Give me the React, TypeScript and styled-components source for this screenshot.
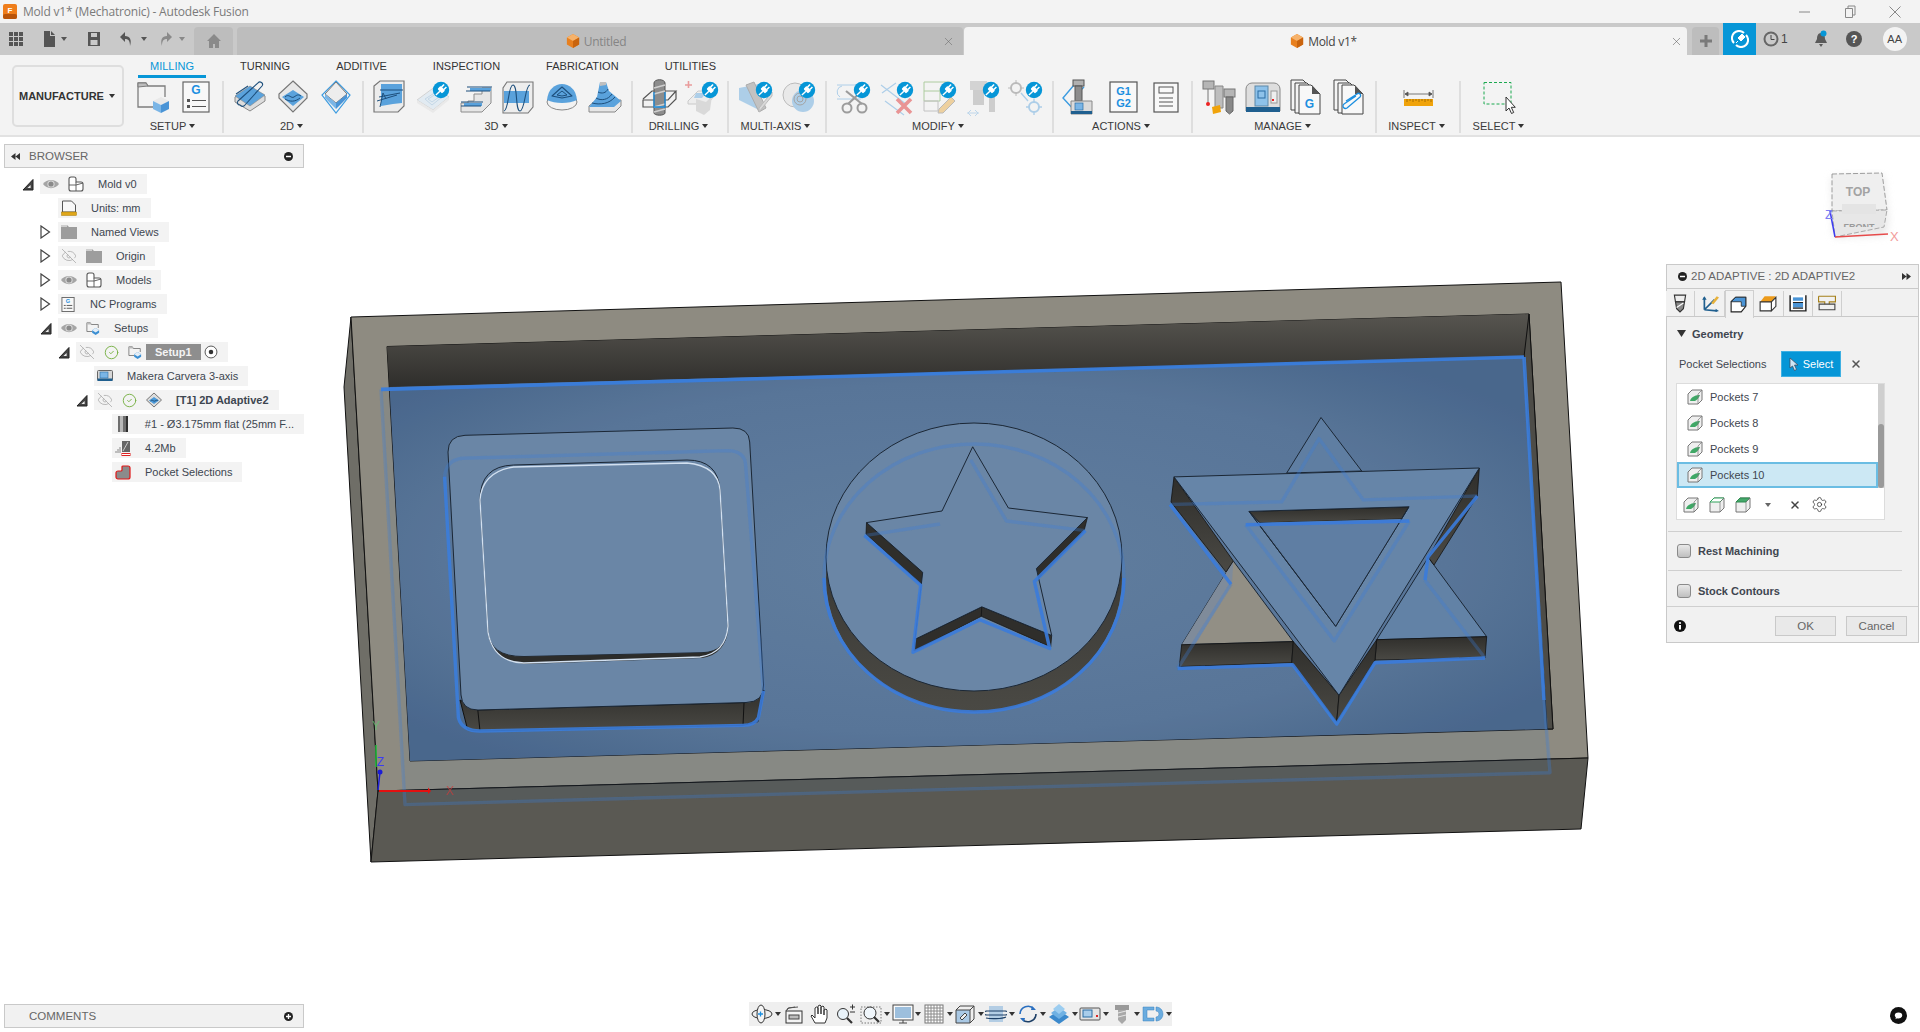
import React from "react";
import styled, { createGlobalStyle } from "styled-components";
import { CircleCheck, EyeOff, Settings, X } from "lucide-react";

const GlobalStyle = createGlobalStyle`
  html, body { margin: 0; padding: 0; height: 100%; background: #fff; overflow: hidden; }
  #root { height: 100%; }
  * { box-sizing: border-box; }
`;

const Page = styled.div`
  width: 1920px;
  height: 1032px;
  display: flex;
  flex-direction: column;
  font-family: "Liberation Sans", Arial, sans-serif;
  font-size: 11px;
  color: #3d4650;
`;

/* title bar */
const TitleBar = styled.div`
  height: 23px;
  display: flex;
  align-items: center;
  background: #f3f3f3;
  padding-left: 3px;
`;
const TitleText = styled.span`
  margin-left: 6px;
  font-family: "Open Sans", sans-serif;
  font-size: 12px;
  color: #7a7a7a;
  letter-spacing: -0.2px;
`;
const WindowButtons = styled.div`
  margin-left: auto;
  display: flex;
  align-items: center;
  gap: 33px;
  padding-right: 19px;
`;

/* document tabs */
const TabBar = styled.div`
  height: 32px;
  display: flex;
  align-items: flex-end;
  background: #c9c9c9;
`;
const QuickTools = styled.div`
  width: 194px;
  height: 32px;
  display: flex;
  align-items: center;
  padding-left: 8px;
`;
const QuickTool = styled.span<{ $w: number; $ml?: number }>`
  width: ${(p) => p.$w}px;
  margin-left: ${(p) => p.$ml || 0}px;
  display: flex;
  align-items: center;
  justify-content: center;
`;
const HomeTab = styled.div`
  width: 39px;
  height: 28px;
  background: #bdbdbd;
  border-radius: 4px 4px 0 0;
  display: flex;
  align-items: center;
  justify-content: center;
`;
const DocTab = styled.div<{ $active?: boolean; $w: number }>`
  width: ${(p) => p.$w}px;
  height: 28px;
  margin-left: ${(p) => (p.$active ? 1 : 4)}px;
  padding-right: ${(p) => (p.$active ? 4 : 8)}px;
  display: grid;
  grid-template-columns: 1fr auto 1fr;
  align-items: center;
  background: ${(p) => (p.$active ? "#f3f3f3" : "#bdbdbd")};
  color: ${(p) => (p.$active ? "#444" : "#858585")};
  border-radius: 4px 4px 0 0;
  font-family: "Open Sans", sans-serif;
  font-size: 12px;
`;
const DocName = styled.span`
  grid-column: 2;
  display: flex;
  align-items: center;
  gap: 4px;
  letter-spacing: -0.3px;
`;
const DocClose = styled.span`
  grid-column: 3;
  justify-self: end;
  display: flex;
`;
const PlusTab = styled(HomeTab)`
  width: 27px;
  margin-left: 5px;
`;
const JobButton = styled.div`
  width: 33px;
  height: 32px;
  margin-left: 4px;
  background: #0696d7;
  display: flex;
  align-items: center;
  justify-content: center;
`;
const StatusIcons = styled.div`
  height: 32px;
  flex: 1;
  display: flex;
  align-items: center;
  padding-left: 7px;
  color: #444;
  font-size: 12px;
`;
const StatusItem = styled.span<{ $ml: number }>`
  margin-left: ${(p) => p.$ml}px;
  display: flex;
`;
const Avatar = styled.span`
  width: 24px;
  height: 24px;
  margin-left: 21px;
  border-radius: 50%;
  background: #f3f3f3;
  display: flex;
  align-items: center;
  justify-content: center;
  font-size: 11px;
  color: #444;
`;

/* ribbon */
const Ribbon = styled.div`
  height: 82px;
  display: flex;
  background: #f3f3f3;
  border-bottom: 2px solid #e2e2e2;
`;
const ModeCell = styled.div`
  width: 124px;
  padding: 10px 0 0 12px;
`;
const ModeButton = styled.div`
  width: 112px;
  height: 62px;
  display: flex;
  align-items: center;
  justify-content: center;
  gap: 5px;
  border: 2px solid #dedede;
  border-radius: 5px;
  font-weight: bold;
  color: #333;
  padding-right: 2px;
`;
const RibbonBody = styled.div`
  flex: 1;
  display: flex;
  flex-direction: column;
`;
const RibbonTabs = styled.div`
  height: 23px;
  margin-left: 14px;
  display: flex;
  gap: 22px;
`;
const RibbonTab = styled.div<{ $active?: boolean }>`
  padding: 6px 12px 0;
  height: 23px;
  line-height: 11px;
  color: ${(p) => (p.$active ? "#0696d7" : "#333")};
  border-bottom: 3px solid ${(p) => (p.$active ? "#0696d7" : "transparent")};
`;
const Groups = styled.div`
  display: flex;
`;
const Group = styled.div<{ $w: number; $first?: boolean }>`
  width: ${(p) => p.$w}px;
  height: 52px;
  margin-top: 3px;
  display: flex;
  flex-direction: column;
  align-items: center;
  border-left: 2px solid ${(p) => (p.$first ? "transparent" : "#dedede")};
`;
const GroupIcons = styled.div`
  display: flex;
  height: 36px;
  margin-top: -2px;
  justify-content: center;
`;
const GroupIcon = styled.span`
  width: 43px;
  height: 36px;
  display: flex;
  justify-content: center;
`;
const GroupLabel = styled.div`
  margin: 4px 0 0 -3px;
  display: flex;
  align-items: center;
  gap: 3px;
  line-height: 14px;
  color: #3a3a3a;
`;
const Caret = styled.i<{ $c?: string }>`
  width: 0;
  height: 0;
  border-left: 3px solid transparent;
  border-right: 3px solid transparent;
  border-top: 4px solid ${(p) => p.$c || "#333"};
`;

/* canvas */
const Canvas = styled.div`
  flex: 1;
  position: relative;
  background: #fff;
`;
const ModelSvg = styled.svg`
  position: absolute;
  inset: 0;
  display: block;
`;

/* browser */
const BrowserPanel = styled.div`
  position: absolute;
  left: 4px;
  top: 7px;
  width: 300px;
`;
const PanelBar = styled.div`
  height: 24px;
  display: flex;
  align-items: center;
  padding: 0 10px 0 6px;
  background: #f1f1f1;
  border: 1px solid #c9c9c9;
  color: #666;
  font-size: 11.5px;
`;
const PanelTitle = styled.span<{ $ml: number }>`
  margin-left: ${(p) => p.$ml}px;
  flex: 1;
`;
const Tree = styled.div`
  margin-top: 6px;
  display: flex;
  flex-direction: column;
  gap: 4px;
`;
const TreeRow = styled.div<{ $depth: number }>`
  height: 20px;
  display: flex;
  align-items: center;
  padding-left: ${(p) => 18 + p.$depth * 18}px;
`;
const Toggle = styled.span`
  width: 18px;
  height: 20px;
  display: flex;
  align-items: center;
`;
const Chip = styled.div`
  height: 20px;
  display: flex;
  align-items: center;
  gap: 9px;
  padding: 0 10px 0 3px;
  background: #f3f3f3;
`;
const RowLabel = styled.span<{ $bold?: boolean }>`
  margin-left: 5px;
  font-weight: ${(p) => (p.$bold ? "bold" : "normal")};
  white-space: nowrap;
`;
const ActiveLabel = styled.span`
  margin: 0 -6px 0 -5px;
  padding: 0 9px;
  height: 16px;
  line-height: 16px;
  background: #8e8e8e;
  color: #f4f4f4;
  font-weight: bold;
`;
const CommentsPanel = styled.div`
  position: absolute;
  left: 4px;
  bottom: 4px;
  width: 300px;
`;

/* view cube */
const ViewCube = styled.svg`
  position: absolute;
  left: 1818px;
  top: 32px;
`;

/* dialog */
const Dialog = styled.div`
  position: absolute;
  left: 1666px;
  top: 127px;
  width: 253px;
  height: 379px;
  display: flex;
  flex-direction: column;
  background: #f1f1f1;
  border: 1px solid #c9c9c9;
  color: #3f4650;
`;
const DialogHead = styled.div`
  height: 24px;
  display: flex;
  align-items: center;
  padding: 0 7px 0 11px;
  gap: 4px;
  border-bottom: 1px solid #c9c9c9;
  color: #666;
  font-size: 11.5px;
`;
const DialogTitle = styled.span`
  flex: 1;
`;
const DialogTabs = styled.div`
  height: 28px;
  display: flex;
  margin-left: -1px;
  border-bottom: 1px solid #c9c9c9;
`;
const DialogTab = styled.span<{ $active?: boolean }>`
  width: 29.4px;
  height: ${(p) => (p.$active ? 28 : 25)}px;
  margin-top: ${(p) => (p.$active ? 1 : 2)}px;
  display: flex;
  align-items: center;
  justify-content: center;
  background: #f1f1f1;
  border-right: 1px solid #cfcfcf;
  border-left: ${(p) => (p.$active ? "1px solid #cfcfcf" : "none")};
  border-top: ${(p) => (p.$active ? "1px solid #cfcfcf" : "none")};
`;
const SectionHead = styled.div`
  height: 34px;
  display: flex;
  align-items: center;
  padding-left: 10px;
  gap: 6px;
  font-weight: bold;
`;
const PocketRow = styled.div`
  height: 26px;
  display: flex;
  align-items: center;
  padding-left: 12px;
`;
const PocketLabel = styled.span`
  width: 102px;
`;
const SelectButton = styled.span`
  width: 60px;
  height: 26px;
  display: flex;
  align-items: center;
  justify-content: center;
  gap: 4px;
  background: #0696d7;
  color: #fff;
  border: 1px solid #3fb0e3;
`;
const ClearButton = styled.span`
  margin-left: 9px;
  display: flex;
`;
const SelectionList = styled.div`
  margin: 6px 0 0 9px;
  width: 209px;
  height: 138px;
  background: #fff;
  border: 1px solid #dcdcdc;
  display: flex;
  flex-direction: column;
`;
const ListBody = styled.div`
  display: grid;
  grid-template-columns: 1fr 6px;
`;
const ListRows = styled.div`
  display: flex;
  flex-direction: column;
`;
const ListRow = styled.div<{ $selected?: boolean }>`
  height: 26px;
  display: flex;
  align-items: center;
  gap: 7px;
  padding-left: ${(p) => (p.$selected ? 8 : 10)}px;
  background: ${(p) => (p.$selected ? "#cce8f4" : "#fff")};
  border: ${(p) => (p.$selected ? "2px solid #6bbde3" : "none")};
`;
const ScrollTrack = styled.div`
  background: #cfcfcf;
  padding-top: 40px;
`;
const ScrollThumb = styled.div`
  height: 64px;
  background: #9a9a9a;
  border-radius: 3px;
`;
const ListTools = styled.div`
  flex: 1;
  display: flex;
  align-items: center;
  padding: 3px 0 0 6px;
  gap: 10px;
`;
const ToolCaret = styled.span`
  margin-left: 4px;
  display: flex;
`;
const ToolClear = styled.span`
  margin-left: 8px;
  display: flex;
`;
const CheckRow = styled.div<{ $top: number }>`
  height: ${(p) => (p.$top ? 36 : 40)}px;
  margin: ${(p) => (p.$top ? 0 : 11)}px 16px 0 1px;
  padding: ${(p) => p.$top}px 0 0 9px;
  display: flex;
  align-items: center;
  font-weight: bold;
  gap: 7px;
  border-top: 1px solid #cfcfcf;
`;
const CheckBoxMark = styled.span`
  width: 14px;
  height: 14px;
  border: 1px solid #8a8a8a;
  border-radius: 3px;
  background: linear-gradient(#e9e9e9, #bfbfbf);
`;
const DialogFoot = styled.div`
  height: 36px;
  margin-top: auto;
  display: flex;
  align-items: center;
  padding: 2px 11px 0 7px;
  border-top: 1px solid #cfcfcf;
`;
const FootButton = styled.span<{ $first?: boolean }>`
  width: 61px;
  height: 20px;
  margin-left: ${(p) => (p.$first ? "auto" : "10px")};
  display: flex;
  align-items: center;
  justify-content: center;
  background: #e9e9e9;
  border: 1px solid #c9c9c9;
  color: #666;
  font-size: 11.5px;
`;

/* navigation bar */
const NavBar = styled.div`
  position: absolute;
  left: 749px;
  bottom: 6px;
  width: 423px;
  height: 24px;
  display: flex;
  align-items: center;
  justify-content: center;
  background: #efefef;
`;
const NavItem = styled.span<{ $caret?: boolean }>`
  width: ${(p) => (p.$caret ? 31.3 : 26)}px;
  display: flex;
  align-items: center;
`;
const NavIcon = styled.span`
  width: 26px;
  display: flex;
  justify-content: center;
`;
const ChatBubble = styled.span`
  position: absolute;
  right: 13px;
  bottom: 8px;
  width: 17px;
  height: 17px;
  border-radius: 50%;
  background: #111;
  display: flex;
  align-items: center;
  justify-content: center;
`;

const BLUE = "#5aa2dc";
const NAVY = "#1d4f7c";
const LINE = "#7d7d7d";

const Plug = ({ x = 26, y = 11 }: { x?: number; y?: number }) => (
  <g transform={`translate(${x} ${y})`}>
    <circle r="8.2" fill="#0696d7" />
    <g transform="rotate(45)" fill="#fff">
      <rect x="-3.2" y="-2.6" width="6.4" height="4.4" rx="1" />
      <rect x="-2.4" y="-6" width="1.5" height="3.6" />
      <rect x="0.9" y="-6" width="1.5" height="3.6" />
      <rect x="-0.7" y="1.6" width="1.4" height="5.6" />
    </g>
  </g>
);

const Cube = ({ cx, cy, r }: { cx: number; cy: number; r: number }) => (
  <g strokeLinejoin="round">
    <path d={`M${cx - r} ${cy - r / 2}L${cx} ${cy - r}L${cx + r} ${cy - r / 2}L${cx} ${cy}z`} fill="#e9e9e9" />
    <path d={`M${cx - r} ${cy - r / 2}L${cx} ${cy}V${cy + r}L${cx - r} ${cy + r / 2}z`} fill="#7ab5e6" />
    <path d={`M${cx + r} ${cy - r / 2}L${cx} ${cy}V${cy + r}L${cx + r} ${cy + r / 2}z`} fill="#4a94d6" />
  </g>
);

const Box36 = ({ children }: { children: React.ReactNode }) => (
  <svg width="36" height="36" viewBox="0 0 36 36" overflow="visible">
    {children}
  </svg>
);

const Faded = ({ children }: { children: React.ReactNode }) => <g opacity="0.45">{children}</g>;

const ribbon: Record<string, React.ReactNode> = {
  setup: (
    <>
      <path d="M3 9V4h8l2 3h17v11M3 9v19h17" fill="none" stroke={LINE} strokeWidth="1.3" />
      <path d="M3 8V4h8l2 3z" fill="#bdbdbd" stroke={LINE} />
      <Cube cx={26} cy={26} r={8} />
    </>
  ),
  gdoc: (
    <>
      <rect x="5" y="3" width="26" height="30" fill="#f8f8f8" stroke="#666" strokeWidth="1.2" />
      <text x="18" y="15" fontSize="12" fontWeight="bold" textAnchor="middle" fill="#1c8fe0">G</text>
      <path d="M9 20h3v3H9zM9 26h3v3H9z" fill="#555" />
      <path d="M14 21.5h14M14 27.5h14" stroke="#555" />
    </>
  ),
  adaptive: (
    <>
      <path d="M3 18L18 8l15 9v5L18 32 3 23z" fill="#ddd" stroke="#888" />
      <path d="M3 17L18 7l15 9-15 11z" fill={BLUE} stroke="#888" strokeWidth="0.6" />
      <path d="M8 26a2.4 2.4 0 0 1-2-4L26 4a2.4 2.4 0 0 1 4 3L13 26a3 3 0 0 1-5 0zM4 15L16 7" fill="none" stroke={NAVY} strokeWidth="1.1" />
    </>
  ),
  pocket: (
    <>
      <path d="M18 2l14 13v4L18 33 4 19v-4z" fill="#e8e8e8" stroke="#777" strokeWidth="1.2" />
      <path d="M18 11l11 7-11 9-11-9z" fill={BLUE} />
      <path d="M10 18c4-4 6 2 9 0s4-3 7-1M10 20c5 3 10 3 15-1" fill="none" stroke={NAVY} />
    </>
  ),
  face: (
    <>
      <path d="M18 2l14 14-14 18L4 16z" fill="none" stroke="#3b9be0" strokeWidth="1.2" />
      <path d="M18 3l11 12-11 9L7 15z" fill="#ededed" stroke="#777" />
      <path d="M7 15l11 9v6L7 19z" fill="#7ab5e6" />
      <path d="M29 15l-11 9v6l11-11z" fill="#4a94d6" />
    </>
  ),
  parallel: (
    <>
      <path d="M2 7l6-5h24v25l-6 6H2z" fill="#ececec" stroke="#777" strokeWidth="1.2" />
      <path d="M9 5h21v19l-9 1-12 2z" fill={BLUE} />
      <path d="M8 11h23M7 18l21-4M5 22l20-6M8 28l3-14 3 6" fill="none" stroke={NAVY} />
    </>
  ),
  contour: (
    <>
      <Faded>
        <path d="M2 21L21 7l13 11-16 13z" fill="#cfe3f2" stroke="#aaa" />
        <path d="M2 21v3l16 10 16-13v-3L18 31z" fill="#ddd" />
        <path d="M10 20l11-7 6 5-10 8zM13 20l8-5 3 3-7 5z" fill="none" stroke="#8bb6d8" />
      </Faded>
      <Plug />
    </>
  ),
  steps: (
    <>
      <path d="M3 33V24h7v-2h6v-7h8V9h9v15l-9 9z" fill="#e6e6e6" stroke="#8c8c8c" />
      <path d="M12 9h21v3H12zM6 24h18v3H6z" fill={BLUE} />
      <path d="M9 8h25M3 23h22M8 12h24M3 27h20" fill="none" stroke={NAVY} strokeWidth="1.1" />
    </>
  ),
  morph: (
    <>
      <path d="M6 3h26v25l-5 6H2V9z" fill="#ededed" stroke="#777" strokeWidth="1.1" />
      <path d="M3 12h25v12H3z" fill={BLUE} />
      <path d="M3 32c5-1 4-26 9-26s2 26 7 26 5-26 10-26" fill="none" stroke={NAVY} strokeWidth="1.1" />
    </>
  ),
  dome: (
    <>
      <ellipse cx="18" cy="23" rx="15" ry="8" fill="#f2f2f2" stroke="#888" />
      <path d="M3 21C4 10 11 5 18 5s14 5 15 16c-8 4-22 4-30 0z" fill={BLUE} />
      <path d="M18 8l10 9-10 2-10-2z" fill="none" stroke={NAVY} strokeWidth="1.1" strokeLinejoin="round" />
      <path d="M18 12l5 4-5 1-5-1z" fill="none" stroke={NAVY} strokeLinejoin="round" />
    </>
  ),
  cone: (
    <>
      <path d="M2 27l6-5 26-1v6l-6 6H2z" fill="#e6e6e6" stroke="#888" />
      <path d="M2 28l8-10 3-15h6l3 9 12 10-7 6z" fill={BLUE} />
      <path d="M13 3h6v3l-6 1z" fill="#bfbfbf" />
      <path d="M11 13c4 2 8 1 10-3M9 19c5 3 12 2 16-4M5 24c8 2 17 1 23-6" fill="none" stroke={NAVY} />
    </>
  ),
  drill: (
    <>
      <path d="M2 20L11 12h24L27 21H2v7h25l8-8v-8" fill="#f1f1f1" stroke="#555" strokeWidth="1.2" />
      <path d="M13 4a5 3 0 0 1 11 0v30a5 2 0 0 1-11 0z" fill="#8c8c8c" stroke="#555" />
      <path d="M13 9l11-3M13 15l11-3M13 28l11-3M13 33l11-3" stroke="#cfcfcf" strokeWidth="1.5" />
      <path d="M13 13v15h11V13" fill="none" stroke="#1c8fe0" strokeWidth="1.3" />
    </>
  ),
  drill2: (
    <>
      <Faded>
        <path d="M1 6h7M4.5 2v7" stroke="#d33" strokeWidth="1.6" />
        <path d="M4 22l10-10h14v8l-8 5H4z" fill="#e6e6e6" stroke="#999" />
        <path d="M12 20l10 3 6-6-2 14-6 5-8-4z" fill="#bbb" />
        <path d="M12 14h10l-4 5h-8z" fill={BLUE} />
      </Faded>
      <Plug />
    </>
  ),
  multi1: (
    <>
      <Faded>
        <path d="M1 9l20-4v26L1 21z" fill={BLUE} />
        <path d="M8 6l8-3 12 26-7 4z" fill="#888" stroke="#555" />
        <path d="M21 33l13-16v-4l-13 16z" fill="#bbb" stroke="#777" />
      </Faded>
      <Plug />
    </>
  ),
  multi2: (
    <>
      <Faded>
        <circle cx="14" cy="16" r="12" fill="#ddd" stroke="#777" />
        <circle cx="22" cy="22" r="11" fill={BLUE} />
        <circle cx="19" cy="20" r="6" fill="none" stroke="#444" />
        <circle cx="19" cy="20" r="3" fill="none" stroke="#444" />
      </Faded>
      <Plug />
    </>
  ),
  trim: (
    <>
      <Faded>
        <path d="M1 6h24M1 20h24M6 7a6 6 0 0 0-2 11" fill="none" stroke={BLUE} />
        <path d="M10 12l16 13M26 12L12 25" stroke="#333" strokeWidth="2.2" />
        <circle cx="11" cy="29" r="4.5" fill="none" stroke="#333" strokeWidth="2" />
        <circle cx="26" cy="29" r="4.5" fill="none" stroke="#333" strokeWidth="2" />
      </Faded>
      <Plug />
    </>
  ),
  remove: (
    <>
      <Faded>
        <path d="M3 14l14-10M2 6l26 20M6 22l19 14" fill="none" stroke={BLUE} strokeWidth="1.2" />
        <path d="M18 20l14 14M32 20L18 34" stroke="#d22" strokeWidth="3.6" />
      </Faded>
      <Plug />
    </>
  ),
  edit: (
    <>
      <Faded>
        <path d="M2 3h26v6H18v13H2zM2 12h18" fill="none" stroke="#5a9e3a" />
        <path d="M2 22h14v10H2z" fill="none" stroke="#888" />
        <path d="M17 30l12-12 4 4-12 12h-5z" fill="#e7a63b" stroke="#777" />
      </Faded>
      <Plug />
    </>
  ),
  tool: (
    <>
      <g opacity="0.35">
        <rect x="5" y="2" width="17" height="9" fill="#999" />
        <path d="M8 11h11v15H8z" fill="#888" />
        <path d="M2 34h12M6 31l-3 3 3 3M10 31l3 3-3 3" fill="none" stroke={BLUE} />
        <rect x="24" y="15" width="6" height="18" fill="#888" />
      </g>
      <Plug />
    </>
  ),
  move: (
    <>
      <Faded>
        <circle cx="8" cy="9" r="5" fill="none" stroke="#777" strokeWidth="2" />
        <path d="M8 1v3M8 14v3M0 9h3M13 9h3" stroke="#777" />
        <circle cx="26" cy="28" r="5" fill="none" stroke={BLUE} strokeWidth="2" />
        <path d="M26 20v3M26 33v3M18 28h3M31 28h3M13 14l7 8" stroke={BLUE} strokeWidth="1.4" />
      </Faded>
      <Plug />
    </>
  ),
  action: (
    <>
      <path d="M12 6L1 19l13 14M22 8l-6 6" fill="none" stroke="#3b9be0" strokeWidth="1.4" />
      <rect x="11" y="1" width="11" height="6" fill="#b0b0b0" stroke="#555" />
      <path d="M13 7h7v15h-7z" fill="#8c8c8c" stroke="#555" />
      <path d="M9 22h21v13H9z" fill="#dbdbdb" stroke="#888" />
      <rect x="13" y="24" width="8" height="7" fill="#7ab5e6" stroke="#2b6da3" strokeWidth="0.7" />
      <rect x="9" y="32" width="21" height="3" fill="#1f5f8f" />
    </>
  ),
  g1g2: (
    <>
      <rect x="5" y="3" width="27" height="30" fill="#f8f8f8" stroke="#555" strokeWidth="1.2" />
      <text x="18.5" y="16" fontSize="11" fontWeight="bold" textAnchor="middle" fill="#1c8fe0">G1</text>
      <text x="18.5" y="28" fontSize="11" fontWeight="bold" textAnchor="middle" fill="#1c8fe0">G2</text>
    </>
  ),
  sheet: (
    <>
      <rect x="6" y="4" width="24" height="29" fill="#f8f8f8" stroke="#555" strokeWidth="1.2" />
      <rect x="11" y="8" width="14" height="6" fill="none" stroke="#555" />
      <path d="M11 19h14M11 23h14M11 27h14" stroke="#555" />
    </>
  ),
  library: (
    <>
      <rect x="1" y="2" width="11" height="8" fill="#b5b5b5" stroke="#777" />
      <path d="M6 10v14" stroke="#777" />
      <circle cx="6" cy="25" r="2" fill="#e22" />
      <path d="M13 7h8v22h-8z" fill="#bdbdbd" stroke="#888" />
      <path d="M10 28l8-2 1 7-8 2z" fill="#f0a30a" />
      <rect x="22" y="10" width="11" height="8" fill="#b5b5b5" stroke="#777" />
      <path d="M24 18h7v14l-3.5 3-3.5-3z" fill="#888" stroke="#666" />
    </>
  ),
  machine: (
    <>
      <path d="M1 10a6 6 0 0 1 6-6h22a6 6 0 0 1 6 6v22H1z" fill="#dedede" stroke="#888" />
      <rect x="1" y="28" width="34" height="5" fill="#1f5f8f" />
      <rect x="10" y="7" width="13" height="20" fill="#8ec2ea" stroke="#5d88a8" />
      <rect x="13" y="12" width="7" height="7" fill="none" stroke="#2b6da3" />
      <rect x="26" y="12" width="6" height="12" fill="#eee" stroke="#999" />
      <rect x="27" y="20" width="2" height="2" fill="#e22" />
    </>
  ),
  gstack: (
    <>
      <path d="M3 1h12l8 8v22H3z" fill="#f4f4f4" stroke="#444" />
      <path d="M7 4h12l8 8v22H7z" fill="#f4f4f4" stroke="#444" />
      <path d="M11 6h12l9 9v20H11z" fill="#f8f8f8" stroke="#444" />
      <path d="M24 6l8 9h-8z" fill="#555" />
      <text x="21.5" y="29" fontSize="12" fontWeight="bold" textAnchor="middle" fill="#1c8fe0">G</text>
    </>
  ),
  clip: (
    <>
      <path d="M3 1h12l8 8v22H3z" fill="#f4f4f4" stroke="#444" />
      <path d="M7 4h12l8 8v22H7z" fill="#f4f4f4" stroke="#444" />
      <path d="M11 6h12l9 9v20H11z" fill="#f8f8f8" stroke="#444" />
      <path d="M24 6l8 9h-8z" fill="#555" />
      <path d="M15 22l11-7a2 2 0 0 1 3 3L16 29a2.5 2.5 0 0 1-3-4l12-8" fill="none" stroke="#1c8fe0" strokeWidth="1.3" />
    </>
  ),
  ruler: (
    <>
      <path d="M4 11v8M33 11v8M5 15h27M5 15l3-2v4zM32 15l-3-2v4z" fill="#555" stroke="#555" strokeWidth="0.8" />
      <rect x="4" y="20" width="29" height="7" fill="#f0a30a" />
      <path d="M7 20v3M10 20v2M13 20v3M16 20v2M19 20v3M22 20v2M25 20v3M28 20v2M31 20v3" stroke="#a86f00" />
    </>
  ),
  select: (
    <>
      <rect x="2" y="3.5" width="27" height="21.5" fill="none" stroke="#1aa84f" strokeWidth="1" strokeDasharray="3 2" />
      <path d="M24 18v14l3-3 2.5 5.5 2.2-1-2.4-5.2h4z" fill="#fff" stroke="#333" strokeLinejoin="round" />
    </>
  ),
};

const ribbonGroups = [
  { label: "SETUP", w: 98, first: true, icons: ["setup", "gdoc"] },
  { label: "2D", w: 140, icons: ["adaptive", "pocket", "face"] },
  { label: "3D", w: 269, icons: ["parallel", "contour", "steps", "morph", "dome", "cone"] },
  { label: "DRILLING", w: 96, icons: ["drill", "drill2"] },
  { label: "MULTI-AXIS", w: 98, icons: ["multi1", "multi2"] },
  { label: "MODIFY", w: 227, icons: ["trim", "remove", "edit", "tool", "move"] },
  { label: "ACTIONS", w: 139, icons: ["action", "g1g2", "sheet"] },
  { label: "MANAGE", w: 184, icons: ["library", "machine", "gstack", "clip"] },
  { label: "INSPECT", w: 84, icons: ["ruler"] },
  { label: "SELECT", w: 80, icons: ["select"] },
];

const Small = ({ s = 16, children }: { s?: number; children: React.ReactNode }) => (
  <svg width={s} height={s} viewBox="0 0 16 16" overflow="visible">
    {children}
  </svg>
);

const OrangeCube = () => (
  <Small s={14}>
    <path d="M8 0l7 4v8l-7 4-7-4V4z" fill="#e8801f" />
    <path d="M8 0l7 4-7 4-7-4z" fill="#f6b26b" />
    <path d="M8 8l7-4v8l-7 4z" fill="#c9640e" />
  </Small>
);

const EyeOn = () => (
  <Small>
    <path d="M0 8C3.500 2.500 12.500 2.500 16 8 12.500 13.500 3.500 13.500 0 8z" fill="#a5a5a5" />
    <circle cx="8" cy="8" r="3.600" fill="#dcdcdc" />
    <circle cx="8" cy="8" r="2.600" fill="#8a8a8a" />
  </Small>
);

const EyeHidden = () => <EyeOff size={16} strokeWidth={1.2} color="#aaa" />;
const Checked = () => <CircleCheck size={15} strokeWidth={1.5} color="#76b043" />;

const Parts = () => (
  <Small>
    <path d="M1 8V3a2 2 0 0 1 2-2h3a2 2 0 0 1 2 2v3h5a2 2 0 0 1 2 2v5a2 2 0 0 1-2 2H3a2 2 0 0 1-2-2z" fill="#fff" stroke="#555" strokeWidth="1.1" />
    <path d="M1 9h7V6M8 9v6M8 9l7-2" fill="none" stroke="#555" strokeWidth="0.9" />
  </Small>
);
const Folder = () => (
  <Small>
    <path d="M0 3V1h6l2 2h8v12H0z" fill="#9d9d9d" />
    <path d="M0 3h6V1H0z" fill="#cfcfcf" />
  </Small>
);
const SetupFolder = () => (
  <Small s={14}>
    <path d="M1 12V2h4l1 2h8v4M1 12h6" fill="none" stroke="#777" />
    <path d="M1 4V2h4l1 2z" fill="#bbb" />
    <path d="M11 8l4 2.500v3L11 16l-4-2.500v-3z" fill="#3b8fd3" />
    <path d="M11 8l4 2.500-4 2.500-4-2.500z" fill="#e5eef6" />
  </Small>
);
const UnitsIcon = () => (
  <Small>
    <path d="M1.500 1h9l4 4v7h-13z" fill="#f8f8f8" stroke="#555" />
    <rect x="0.5" y="12" width="15" height="3.5" fill="#e0a71a" stroke="#a87c08" strokeWidth="0.5" />
  </Small>
);
const NcIcon = () => (
  <Small s={15}>
    <rect x="1" y="0.5" width="13" height="15" fill="#f8f8f8" stroke="#666" />
    <text x="7.5" y="6.5" fontSize="6" fontWeight="bold" fill="#1c8fe0" textAnchor="middle">G</text>
    <path d="M3 9h2M6 9h6M3 12h2M6 12h6" stroke="#555" />
  </Small>
);
const MachineIcon = () => (
  <Small>
    <rect x="0.5" y="2.5" width="15" height="10" rx="1" fill="#d7d7d7" stroke="#666" />
    <rect x="3" y="4" width="8" height="6" fill="#7ab5e6" stroke="#2b6da3" strokeWidth="0.6" />
    <rect x="0.5" y="10.5" width="15" height="2.5" fill="#1f5f8f" />
  </Small>
);
const OpIcon = () => (
  <Small>
    <path d="M8 1l7.500 7L8 15 .5 8z" fill="#ddd" stroke="#777" />
    <path d="M8 5l5 3.500L8 12 3 8.500z" fill="#4c9ad8" />
    <path d="M4.500 9c2-2 3 .8 4.500 0s2-1 3-.5" fill="none" stroke="#1d4f7c" />
  </Small>
);
const ToolIcon = () => (
  <Small>
    <rect x="3" y="0" width="10" height="16" fill="#6f6f6f" />
    <rect x="5" y="0" width="3" height="16" fill="#b9b9b9" />
    <rect x="11" y="0" width="2" height="16" fill="#2f2f2f" />
  </Small>
);
const SizeIcon = () => (
  <Small>
    <path d="M1 11v2M3 9v4M5 7v6" stroke="#888" />
    <rect x="7" y="1" width="8" height="11" fill="#666" />
    <path d="M8 11l5-9" stroke="#ccc" />
    <rect x="7" y="13.500" width="8" height="2" fill="#fff" stroke="#d22" />
  </Small>
);
const PocketIcon = () => (
  <Small>
    <path d="M8 2h5a2 2 0 0 1 2 2v9a2 2 0 0 1-2 2H3a2 2 0 0 1-2-2V9a2 2 0 0 1 2-2h3a1 1 0 0 0 1-1V3a1 1 0 0 1 1-1z" fill="#8b8b8b" stroke="#e01818" strokeWidth="1.2" />
  </Small>
);
const Target = () => (
  <Small s={14}>
    <circle cx="8" cy="8" r="6.800" fill="#fff" stroke="#444" />
    <circle cx="8" cy="8" r="2.600" fill="#333" />
  </Small>
);
const Open = () => (
  <svg width="12" height="13" viewBox="0 0 12 13">
    <path d="M11 1.500V12H1z" fill="#444" stroke="#222" />
    <path d="M8.600 7v3H5.400z" fill="#eee" />
  </svg>
);
const Closed = () => (
  <svg width="11" height="14" viewBox="0 0 11 14">
    <path d="M1 1l8.500 6L1 13z" fill="#fff" stroke="#444" strokeWidth="1.2" />
  </svg>
);
const MinusDot = () => (
  <Small s={9}>
    <circle cx="8" cy="8" r="8" fill="#222" />
    <rect x="3.500" y="6.700" width="9" height="2.600" fill="#fff" />
  </Small>
);
const PlusDot = () => (
  <Small s={9}>
    <circle cx="8" cy="8" r="8" fill="#222" />
    <path d="M3.500 8h9M8 3.500v9" stroke="#fff" strokeWidth="2.400" />
  </Small>
);
const Rewind = () => (
  <svg width="9" height="7" viewBox="0 0 9 7">
    <path d="M4.500 0v7L0 3.500zM9 0v7L4.500 3.500z" fill="#333" />
  </svg>
);

type Row = {
  depth: number;
  toggle?: "open" | "closed";
  icons: React.ReactNode[];
  label: string;
  bold?: boolean;
  active?: boolean;
};

const rows: Row[] = [
  { depth: 0, toggle: "open", icons: [<EyeOn />, <Parts />], label: "Mold v0" },
  { depth: 1, icons: [<UnitsIcon />], label: "Units: mm" },
  { depth: 1, toggle: "closed", icons: [<Folder />], label: "Named Views" },
  { depth: 1, toggle: "closed", icons: [<EyeHidden />, <Folder />], label: "Origin" },
  { depth: 1, toggle: "closed", icons: [<EyeOn />, <Parts />], label: "Models" },
  { depth: 1, toggle: "closed", icons: [<NcIcon />], label: "NC Programs" },
  { depth: 1, toggle: "open", icons: [<EyeOn />, <SetupFolder />], label: "Setups" },
  { depth: 2, toggle: "open", icons: [<EyeHidden />, <Checked />, <SetupFolder />], label: "Setup1", active: true },
  { depth: 3, icons: [<MachineIcon />], label: "Makera Carvera 3-axis" },
  { depth: 3, toggle: "open", icons: [<EyeHidden />, <Checked />, <OpIcon />], label: "[T1] 2D Adaptive2", bold: true },
  { depth: 4, icons: [<ToolIcon />], label: "#1 - Ø3.175mm flat (25mm F..." },
  { depth: 4, icons: [<SizeIcon />], label: "4.2Mb" },
  { depth: 4, icons: [<PocketIcon />], label: "Pocket Selections" },
];

const FaceIcon = ({ mode }: { mode: "edge" | "top" | "solid" }) => (
  <Small>
    <path d="M1 5l4-4h10v10l-4 4H1z" fill="#efefef" stroke="#777" />
    {mode === "edge" && <path d="M3 12c1-5 7-6 10-6-1 3-3 5-5 6z" fill="#3fa866" />}
    {mode === "top" && <path d="M1 5l4-4h10l-4 4z" fill="#fff" stroke="#2fa35a" />}
    {mode === "solid" && <path d="M1 5l4-4h10l-4 4z" fill="#45a86a" stroke="#2f8a50" />}
    <path d="M11 5v10M11 5l4-4" fill="none" stroke="#777" strokeWidth="0.7" />
  </Small>
);

const navIcons: { node: React.ReactNode; caret?: boolean }[] = [
  {
    caret: true,
    node: (
      <>
        <ellipse cx="11" cy="10" rx="10" ry="4.500" fill="none" stroke="#333" />
        <ellipse cx="10" cy="10" rx="4" ry="9" fill="#f4f4f4" stroke="#333" />
        <path d="M7 10h5M9.500 7.500v5" stroke="#1c8fe0" strokeWidth="1.300" />
      </>
    ),
  },
  {
    node: (
      <>
        <rect x="3" y="7" width="16" height="12" fill="#f4f4f4" stroke="#333" />
        <path d="M3 7l2-3 10-1M3 7l3-3M6 4l6-1" fill="none" stroke="#555" />
        <rect x="6" y="11" width="10" height="4" fill="#bbb" stroke="#444" />
      </>
    ),
  },
  {
    node: (
      <path d="M6 19l-4-7 1-1 3 3V4l1.600-1L9 4v6V2l2-1 1 1v8V3l2-1 1 1v8-5l2-1 1 1v8l-2 5z" fill="#fff" stroke="#333" strokeLinejoin="round" />
    ),
  },
  {
    node: (
      <>
        <circle cx="8" cy="10" r="5.500" fill="#e9f3fa" stroke="#333" />
        <path d="M12 14l5 5" stroke="#333" strokeWidth="2.200" />
        <path d="M15 3h5M17.500 .5v5M15 8h5" stroke="#333" />
      </>
    ),
  },
  {
    caret: true,
    node: (
      <>
        <rect x="1" y="3" width="20" height="16" fill="none" stroke="#777" strokeDasharray="1.500 1.500" />
        <circle cx="10" cy="9" r="6" fill="#f0f6fb" stroke="#333" />
        <path d="M14 13l5 5" stroke="#333" strokeWidth="2.200" />
      </>
    ),
  },
  {
    caret: true,
    node: (
      <>
        <rect x="1" y="1" width="20" height="15" fill="#fafafa" stroke="#444" />
        <rect x="3" y="3" width="16" height="11" fill="#9dbfdd" />
        <path d="M7 19h8M11 16v3" stroke="#444" />
      </>
    ),
  },
  {
    caret: true,
    node: (
      <>
        <rect x="2" y="1" width="18" height="18" fill="#fff" stroke="#777" />
        <path d="M5 1v18M8 1v18M11 1v18M14 1v18M17 1v18M2 4h18M2 7h18M2 10h18M2 13h18M2 16h18" stroke="#8a8a8a" />
      </>
    ),
  },
  {
    caret: true,
    node: (
      <>
        <path d="M2 6h14v13H2z" fill="#a9c8e4" stroke="#444" />
        <path d="M2 6l4-4h14v13l-4 4M16 6l4-4" fill="none" stroke="#444" />
        <path d="M6 14l5-5 2 2-5 5z" fill="#eee" stroke="#444" />
      </>
    ),
  },
  {
    caret: true,
    node: (
      <>
        <rect x="4" y="2" width="14" height="16" fill="#b3cde4" />
        <path d="M1 7h20M1 11h20M1 14c4 1 16 1 20-1M2 7a3 2 0 0 0 0 4M20 11a3 2 0 0 0 0-4" fill="none" stroke="#1d3f66" strokeWidth="1.100" />
      </>
    ),
  },
  {
    caret: true,
    node: (
      <>
        <path d="M3 10a8 8 0 0 1 14-5" fill="none" stroke="#2a6fc0" strokeWidth="1.600" />
        <path d="M19 10a8 8 0 0 1-14 5" fill="none" stroke="#1d3f66" strokeWidth="1.600" />
        <path d="M15 2l4 4h-5zM7 18l-4-4h5z" fill="#2a6fc0" />
      </>
    ),
  },
  {
    caret: true,
    node: (
      <>
        <path d="M11 6l10 7-10 7-10-7z" fill="#3b89cc" />
        <path d="M11 3l8 6-8 6-8-6z" fill="#6fb1e3" />
        <path d="M11 0l6 5-6 5-6-5z" fill="#9ccdf0" />
      </>
    ),
  },
  {
    caret: true,
    node: (
      <>
        <rect x="1" y="4" width="20" height="12" rx="1" fill="#e3e3e3" stroke="#555" />
        <rect x="4" y="6" width="9" height="7" fill="#a9cdea" stroke="#2b6da3" />
        <rect x="17" y="11" width="2" height="2" fill="#d22" />
      </>
    ),
  },
  {
    caret: true,
    node: (
      <>
        <rect x="4" y="1" width="14" height="5" fill="#9a9a9a" />
        <path d="M7 6h8v10l-4 4-4-4z" fill="#a8a8a8" />
        <path d="M7 9l8-2M7 13l8-2" stroke="#e5e5e5" />
      </>
    ),
  },
  {
    caret: true,
    node: (
      <path d="M1 3h11v3h-7v8h7v3H1zM14 3h1a7 7 0 0 1 6 7 7 7 0 0 1-6 7h-1v-4a3 3 0 0 0 0-6z" fill="#6aacdf" stroke="#3b80bf" strokeWidth="0.5" />
    ),
  },
];

const CONTOUR = "#3a7ddc";

const squareTop =
  "M465 435.300L732.900 428Q749 428 749.700 442L763.500 685Q764 702 746 702.500L478 710Q462 710 461 695L448 452Q448 436 465 435.300z";
const squareInner =
  "M513.500 465L687 460Q718 460 720 490L727.800 626Q728 652 702 652.700L524 656.500Q489 657 488 630L480 500Q480 466 513.500 465z";
const squareGlow =
  "M480 500L488 632Q493 662 523.700 663L700 657Q726 653 728 626L720 490Q718 466 687 463L513.500 467Q482 472 480 500z";
const starPts =
  "972.700,446.800 1008.400,508 1087.400,517.600 1036.400,568.500 1051.700,635.500 981.800,606.800 915,639.300 922.700,572.300 866.500,522.600 942,511";

const Model = () => (
  <ModelSvg width="1920" height="895" viewBox="0 137 1920 895">
    <defs>
      <radialGradient id="floor" cx="0.48" cy="0.5" r="0.62">
        <stop offset="0" stopColor="#647f9e" />
        <stop offset="0.7" stopColor="#5b7696" />
        <stop offset="1" stopColor="#4a6689" />
      </radialGradient>
      <linearGradient id="wall" x1="0" y1="0" x2="0" y2="1">
        <stop offset="0" stopColor="#575550" />
        <stop offset="1" stopColor="#2f2e2b" />
      </linearGradient>
      <linearGradient id="side" x1="0" y1="0" x2="0" y2="1">
        <stop offset="0" stopColor="#2f2e2b" />
        <stop offset="1" stopColor="#4a4944" />
      </linearGradient>
      <filter id="glow" x="-5%" y="-5%" width="110%" height="110%">
        <feGaussianBlur stdDeviation="0.6" />
      </filter>
    </defs>
    <g stroke="#111" strokeWidth="1" strokeLinejoin="round">
      <path d="M351 317L344 387L371 862L378 791z" fill="#6f6e67" />
      <path d="M351 317L1561 282L1588 758L378 791z" fill="#8e8b81" />
      <path d="M378 791L1588 758L1581 829L371 862z" fill="#5a5953" />
      <path d="M387 346.500L1529 314L1553 729L410 761z" fill="#2f2e2b" />
      <path d="M387 346.500L1529 314L1524 357L389.500 387z" fill="url(#wall)" stroke="none" />
      <path d="M1529 314L1553 729L1547 729L1524 357z" fill="#4d4c47" />
      <path d="M389.500 387L1524 357L1547 729L410 761z" fill="url(#floor)" stroke="none" />
    </g>
    <path d="M381 389.400L1524 357L1550 772.700L405 804.600z" fill="rgba(70,115,180,0.08)" />

    <path d="M460 700L467.500 729Q472 731 480 731L743 725.400L758 721.600L764 690L746 702.500L478 710z" fill="url(#side)" stroke="#111" />
    <path d="M477.800 710L480 731M744 703L743 725" stroke="#111" fill="none" />
    <path d={squareTop} fill="#6a86a6" stroke="#1b2735" />
    <path d={squareInner} fill="#6a86a6" stroke="#1b2735" />
    <path d="M488 631Q490 660 524 664L702 658Q727 654 728 626Q726 652 702 652.700L524 656.500Q489 657 488 631z" fill="#2c2c2a" />
    <path d={squareGlow} fill="none" stroke="#d2e0f0" strokeWidth="1.300" />

    <ellipse cx="974" cy="578" rx="148" ry="134" fill="url(#side)" />
    <ellipse cx="974" cy="557" rx="148" ry="134" fill="#6a86a6" stroke="#1b2735" />

    <g fill="#2f2e2b" stroke="#111" strokeWidth="0.7">
      <path d="M866.500 522.600L866 534L922 585L922.700 572.300z" />
      <path d="M1087.400 517.600L1084 531L1036 581L1036.400 568.500z" />
      <path d="M915 639.300L914 651L981.300 616.300L981.800 606.800z" />
      <path d="M981.800 606.800L981.300 616.300L1050.700 647L1051.700 635.500z" />
    </g>
    <polygon points={starPts} fill="#6a86a6" stroke="#1b2735" />

    <path d="M1321 417.500L1286.700 473L1361.700 471z" fill="#5f7ea2" stroke="#1b2735" />
    <path d="M1428.300 557.400L1486.700 636.700L1376.700 639.700z" fill="#6282a6" stroke="#1b2735" />
    <path d="M1233.300 561L1181.700 644.700L1293.300 641.600z" fill="#928f85" stroke="#1b2735" />
    <path d="M1233.300 561L1181.700 644.700L1195 644.400L1232 584z" fill="#7f8b9a" />
    <g fill="url(#side)" stroke="#111" strokeWidth="0.8">
      <path d="M1181.700 644.700L1179.300 666.600L1291.700 662.700L1293.300 641.600z" />
      <path d="M1376.700 639.700L1375 660L1485 658L1486.700 636.700z" />
      <path d="M1174 476.900L1171 502L1226 572L1233.300 561z" />
      <path d="M1293.300 641.600L1291.700 662.700L1336.700 722L1339 695.300z" />
      <path d="M1339 695.300L1336.700 722L1375 660L1376.700 639.700z" />
      <path d="M1428.300 557.400L1434 565L1477.300 496L1479.300 468z" />
      <path d="M1249 511.400L1409 506.800L1401.700 519L1260 522.900z" />
    </g>
    <path d="M1174 476.900L1479.300 468L1339 695.300zM1249 511.400L1335.700 626.300L1409 506.800z" fill="#6685a8" fillRule="evenodd" stroke="#1b2735" />
    <path d="M1260 522.900L1401.700 519L1335.700 626.300z" fill="#5f7ea3" stroke="none" />
    <path d="M1249 511.400L1335.700 626.300L1409 506.800" fill="none" stroke="#1b2735" />

    <g fill="none" stroke={CONTOUR} filter="url(#glow)" strokeLinejoin="round" strokeWidth="3.400">
      <g opacity="0.3">
        <path d="M444.600 476.700Q446 460 462.400 458.300L727.800 450.600Q745 451 745.600 465L763.500 691" />
        <path d="M824 578A150 134 0 0 1 1124 578" />
        <path d="M1170 504.500L1281.700 501.800L1319 438.600L1363.300 499.900L1477.300 496" />
        <path d="M1425 580.300L1485 658M1231 584.200L1177.700 668.500" />
        <path d="M1245.700 524.800L1334.300 640.900L1409.300 521" />
        <path d="M970.700 459.800L1006.400 521L1085.400 530.600M940 524L864.500 535.600" />
      </g>
      <g opacity="0.9">
        <path d="M763.500 691L758.400 717.700Q755 725 743 725.400L480.300 731Q462 731 458.400 717.700L444.600 476.700" />
        <path d="M824 578A150 134 0 0 0 1124 578" />
        <path d="M864.500 535.600L920.700 585.300L913 652.300L979.800 619.800L1049.700 648.500L1034.400 581.500L1085.400 530.600" />
        <path d="M1170 504.500L1231 584.200M1477.300 496L1428 557L1425 580.300" />
        <path d="M1485 658L1375 662.700L1336.700 724L1292.700 664.700L1177.700 668.500" />
        <path d="M1245.700 524.800L1409.300 521" />
      </g>
      <path d="M381 389.400L1524 357" strokeWidth="3.600" opacity="0.95" />
      <path d="M1524 357L1544 700" strokeWidth="3.600" opacity="0.9" />
      <path d="M1544 700L1550 772.700L405 804.600L381 389.400" opacity="0.3" />
    </g>

    <path d="M376 745V767" stroke="#1fbf3a" strokeWidth="1.500" />
    <path d="M378 790L380 772" stroke="#1c1cd6" strokeWidth="1.500" />
    <circle cx="380" cy="772" r="2.500" fill="#1c1cd6" />
    <path d="M379 791H428" stroke="#e31010" strokeWidth="2" />
    <path d="M428 787.500L431 791L428 794z" fill="#e31010" />
    <g fontSize="12" fontFamily="Liberation Sans, sans-serif">
      <text x="372" y="730" fill="#5fc96f" opacity="0.7">Y</text>
      <text x="377" y="766" fill="#3c3cf0">Z</text>
      <text x="446" y="795" fill="#d23c3c" opacity="0.7">X</text>
    </g>
  </ModelSvg>
);

const Cube3D = () => (
  <ViewCube width="96" height="90" viewBox="0 0 96 90">
    <defs>
      <filter id="soft" x="-20%" y="-20%" width="140%" height="140%">
        <feGaussianBlur stdDeviation="4" />
      </filter>
    </defs>
    <path d="M16 68L68 66L70 50L65 6L14 8z" fill="#ddd" filter="url(#soft)" opacity="0.7" />
    <path d="M14 5L64 4L69 41L66 58L17 68z" fill="#ededed" />
    <path d="M14 5L64 4L69 41L14 42z" fill="#efefef" stroke="#888" strokeDasharray="5 2" strokeWidth="0.8" />
    <path d="M14 42L69 41L66 58L17 68z" fill="#e7e7e7" stroke="#999" strokeDasharray="5 2" strokeWidth="0.8" />
    <rect x="24" y="35" width="34" height="10" fill="#e4e4e4" />
    <text x="40" y="27" fontSize="12" fontWeight="bold" fill="#a3a3a3" textAnchor="middle" fontFamily="Liberation Sans, sans-serif">TOP</text>
    <svg x="10" y="53" width="60" height="5">
      <text x="31" y="8" fontSize="9" fontWeight="bold" fill="#9a9a9a" textAnchor="middle" fontFamily="Liberation Sans, sans-serif">FRONT</text>
    </svg>
    <path d="M12 42L17 68" stroke="#3c3cf0" strokeWidth="1.500" />
    <path d="M17 68L70 65" stroke="#e64b4b" strokeWidth="1.500" />
    <text x="7" y="50" fontSize="13" fill="#7d7df2" fontFamily="Liberation Sans, sans-serif">Z</text>
    <text x="72" y="72" fontSize="13" fill="#f29b9b" fontFamily="Liberation Sans, sans-serif">X</text>
  </ViewCube>
);

const TabIcon = ({ children, w = 16 }: { children: React.ReactNode; w?: number }) => (
  <svg width={w} height="16" viewBox={`0 0 ${w} 16`}>
    {children}
  </svg>
);

const dialogTabIcons: React.ReactNode[] = [
  <Small s={18}>
    <path d="M3 1h10l-1 6H4z" fill="#eee" stroke="#333" />
    <path d="M4 7h8l-1 6-3 3-3-3z" fill="#888" stroke="#333" />
    <path d="M5 12l6-4" stroke="#fff" />
  </Small>,
  <Small s={18}>
    <path d="M3 14V3M3 14l11 1M3 14l9-9" stroke="#1f5f8f" strokeWidth="1.500" />
    <path d="M1 5l2-3 2 3zM13 13l3 2-3 1z" fill="#1f5f8f" />
    <path d="M9 8l5-6 2 1-5 6z" fill="#e7b13b" />
  </Small>,
  <Small s={18}>
    <path d="M1 6l4-4h9v8l-4 5H1z" fill="#fff" stroke="#222" />
    <path d="M5 2h9v8h-4V6H1z" fill="#4a94d6" stroke="#222" strokeWidth="0.7" />
  </Small>,
  <Small s={18}>
    <path d="M1 7l4-5h10l-4 5z" fill="#ec9b1c" />
    <path d="M1 7h10v8H1zM11 7l4-4v8l-4 4z" fill="#fff" stroke="#333" />
  </Small>,
  <Small s={18}>
    <path d="M1 1v14h14V1" fill="#fff" stroke="#222" strokeWidth="1.300" />
    <rect x="3.500" y="3" width="9" height="3" fill="#4a94d6" />
    <rect x="3.500" y="8" width="9" height="4" fill="#4a94d6" />
    <path d="M3.500 7.500h9M3.500 12.500h9" stroke="#222" />
  </Small>,
  <Small s={18}>
    <path d="M0.500 2h15v5H10v2" fill="none" stroke="#a5801a" />
    <path d="M0.500 2v5H6v2" fill="none" stroke="#a5801a" />
    <path d="M1 9h14v5H1z" fill="none" stroke="#444" />
  </Small>,
];

export default function App() {
  return (
    <>
      <GlobalStyle />
      <Page>
        <TitleBar>
          <svg width="14" height="15" viewBox="0 0 14 15">
            <rect width="14" height="15" rx="2" fill="#ef7d1a" />
            <rect y="10" width="14" height="5" rx="2" fill="#b9540a" />
            <text x="7" y="9" fontSize="8" fontWeight="bold" fill="#fff" textAnchor="middle">F</text>
          </svg>
          <TitleText>Mold v1* (Mechatronic) - Autodesk Fusion</TitleText>
          <WindowButtons>
            <svg width="12" height="12" viewBox="0 0 12 12"><path d="M0 6h11" stroke="#888" /></svg>
            <svg width="12" height="14" viewBox="0 0 12 14"><path d="M1.500 3.500h7v9h-7zM4 3V1h7v9H9" fill="none" stroke="#888" /></svg>
            <svg width="12" height="12" viewBox="0 0 12 12"><path d="M0.500 0.500l11 11M11.500 0.500l-11 11" stroke="#888" /></svg>
          </WindowButtons>
        </TitleBar>

        <TabBar>
          <QuickTools>
            <QuickTool $w={16}>
              <TabIcon>
                <path d="M1 1h4v4H1zM6 1h4v4H6zM11 1h4v4h-4zM1 6h4v4H1zM6 6h4v4H6zM11 6h4v4h-4zM1 11h4v4H1zM6 11h4v4H6zM11 11h4v4h-4z" fill="#555" />
              </TabIcon>
            </QuickTool>
            <QuickTool $w={26} $ml={12}>
              <TabIcon>
                <path d="M3 0h6v5h5v11H3zM10 0l4 4h-4z" fill="#555" />
              </TabIcon>
            </QuickTool>
            <QuickTool $w={6} $ml={-1}><Caret $c="#555" /></QuickTool>
            <QuickTool $w={16} $ml={19}>
              <TabIcon>
                <path d="M2 1h12v14H2z" fill="#555" />
                <path d="M5 2h6v4H5z" fill="#c9c9c9" />
                <path d="M4.500 9h7v5h-7z" fill="#c9c9c9" />
              </TabIcon>
            </QuickTool>
            <QuickTool $w={20} $ml={15}>
              <TabIcon>
                <path d="M6 1L1 6l5 5V8c3 0 5 1 5 7 2-6 0-10-5-10z" fill="#555" />
              </TabIcon>
            </QuickTool>
            <QuickTool $w={6} $ml={4}><Caret $c="#555" /></QuickTool>
            <QuickTool $w={20} $ml={8}>
              <TabIcon>
                <path d="M10 1l5 5-5 5V8c-3 0-5 1-5 7-2-6 0-10 5-10z" fill="#8a8a8a" />
              </TabIcon>
            </QuickTool>
            <QuickTool $w={6} $ml={4}><Caret $c="#888" /></QuickTool>
          </QuickTools>
          <HomeTab>
            <TabIcon>
              <path d="M8 1l7 7h-2v7H9v-4H7v4H3V8H1z" fill="#8a8a8a" />
            </TabIcon>
          </HomeTab>
          <DocTab $w={726}>
            <DocName><OrangeCube />Untitled</DocName>
            <DocClose><X size={13} strokeWidth={1} color="#666" /></DocClose>
          </DocTab>
          <DocTab $w={723} $active>
            <DocName><OrangeCube />Mold v1*</DocName>
            <DocClose><X size={13} strokeWidth={1} color="#555" /></DocClose>
          </DocTab>
          <PlusTab>
            <svg width="14" height="14" viewBox="0 0 14 14"><path d="M7 1v12M1 7h12" stroke="#7a7a7a" strokeWidth="3" /></svg>
          </PlusTab>
          <JobButton>
            <svg width="18" height="18" viewBox="0 0 18 18">
              <path d="M3 13A7 7 0 0 1 13 3M15 5a7 7 0 0 1-10 10" fill="none" stroke="#fff" strokeWidth="2" />
              <path d="M7 8l4-4 3 3-4 4zM7 11l-2 2" fill="#fff" stroke="#fff" />
            </svg>
          </JobButton>
          <StatusIcons>
            <svg width="16" height="16" viewBox="0 0 16 16">
              <circle cx="8" cy="8" r="7.500" fill="#666" />
              <circle cx="8" cy="8" r="5.500" fill="#c9c9c9" />
              <path d="M8 4v4.500h3.500" fill="none" stroke="#444" />
            </svg>
            <StatusItem $ml={2}>1</StatusItem>
            <StatusItem $ml={25}>
              <svg width="16" height="18" viewBox="0 0 16 18">
                <path d="M8 3c-3 0-4 3-4 6l-2 4h12l-2-4c0-3-1-6-4-6zM6 14h4l-2 3z" fill="#5a5a5a" />
                <circle cx="10.500" cy="3.500" r="3" fill="#0696d7" />
              </svg>
            </StatusItem>
            <StatusItem $ml={17}>
              <svg width="16" height="16" viewBox="0 0 16 16">
                <circle cx="8" cy="8" r="8" fill="#555" />
                <text x="8" y="12" fontSize="11" fontWeight="bold" fill="#fff" textAnchor="middle">?</text>
              </svg>
            </StatusItem>
            <Avatar>AA</Avatar>
          </StatusIcons>
        </TabBar>

        <Ribbon>
          <ModeCell>
            <ModeButton>MANUFACTURE <Caret /></ModeButton>
          </ModeCell>
          <RibbonBody>
            <RibbonTabs>
              <RibbonTab $active>MILLING</RibbonTab>
              <RibbonTab>TURNING</RibbonTab>
              <RibbonTab>ADDITIVE</RibbonTab>
              <RibbonTab>INSPECTION</RibbonTab>
              <RibbonTab>FABRICATION</RibbonTab>
              <RibbonTab>UTILITIES</RibbonTab>
            </RibbonTabs>
            <Groups>
              {ribbonGroups.map((g) => (
                <Group key={g.label} $w={g.w} $first={g.first}>
                  <GroupIcons>
                    {g.icons.map((name) => (
                      <GroupIcon key={name}>
                        <Box36>{ribbon[name]}</Box36>
                      </GroupIcon>
                    ))}
                  </GroupIcons>
                  <GroupLabel>
                    {g.label} <Caret />
                  </GroupLabel>
                </Group>
              ))}
            </Groups>
          </RibbonBody>
        </Ribbon>

        <Canvas>
          <Model />
          <Cube3D />

          <BrowserPanel>
            <PanelBar>
              <Rewind />
              <PanelTitle $ml={9}>BROWSER</PanelTitle>
              <MinusDot />
            </PanelBar>
            <Tree>
              {rows.map((r) => (
                <TreeRow key={r.label} $depth={r.depth}>
                  <Toggle>
                    {r.toggle === "open" && <Open />}
                    {r.toggle === "closed" && <Closed />}
                  </Toggle>
                  <Chip>
                    {r.icons.map((icon, i) => (
                      <React.Fragment key={i}>{icon}</React.Fragment>
                    ))}
                    {r.active ? (
                      <>
                        <ActiveLabel>{r.label}</ActiveLabel>
                        <Target />
                      </>
                    ) : (
                      <RowLabel $bold={r.bold}>{r.label}</RowLabel>
                    )}
                  </Chip>
                </TreeRow>
              ))}
            </Tree>
          </BrowserPanel>

          <CommentsPanel>
            <PanelBar>
              <PanelTitle $ml={18}>COMMENTS</PanelTitle>
              <PlusDot />
            </PanelBar>
          </CommentsPanel>

          <Dialog>
            <DialogHead>
              <MinusDot />
              <DialogTitle>2D ADAPTIVE : 2D ADAPTIVE2</DialogTitle>
              <svg width="9" height="7" viewBox="0 0 9 7"><path d="M0 0v7l4.500-3.500zM4.500 0v7L9 3.500z" fill="#333" /></svg>
            </DialogHead>
            <DialogTabs>
              {dialogTabIcons.map((icon, i) => (
                <DialogTab key={i} $active={i === 2}>{icon}</DialogTab>
              ))}
            </DialogTabs>
            <SectionHead>
              <svg width="9" height="7" viewBox="0 0 9 7"><path d="M0 0h9L4.500 7z" fill="#333" /></svg>
              Geometry
            </SectionHead>
            <PocketRow>
              <PocketLabel>Pocket Selections</PocketLabel>
              <SelectButton>
                <svg width="10" height="14" viewBox="0 0 10 14"><path d="M1 1v10l2.500-2 2 4.500 2-1L5.500 8H9z" fill="#cde6f5" stroke="#445" strokeWidth="0.7" /></svg>
                Select
              </SelectButton>
              <ClearButton><X size={12} strokeWidth={3} color="#555" /></ClearButton>
            </PocketRow>
            <SelectionList>
              <ListBody>
                <ListRows>
                  {["Pockets 7", "Pockets 8", "Pockets 9", "Pockets 10"].map((name) => (
                    <ListRow key={name} $selected={name === "Pockets 10"}>
                      <FaceIcon mode="edge" />
                      {name}
                    </ListRow>
                  ))}
                </ListRows>
                <ScrollTrack><ScrollThumb /></ScrollTrack>
              </ListBody>
              <ListTools>
                <FaceIcon mode="edge" />
                <FaceIcon mode="top" />
                <FaceIcon mode="solid" />
                <ToolCaret><Caret $c="#666" /></ToolCaret>
                <ToolClear><X size={12} strokeWidth={3} color="#444" /></ToolClear>
                <Settings size={17} strokeWidth={1.1} color="#333" />
              </ListTools>
            </SelectionList>
            <CheckRow $top={0}><CheckBoxMark />Rest Machining</CheckRow>
            <CheckRow $top={4}><CheckBoxMark />Stock Contours</CheckRow>
            <DialogFoot>
              <svg width="12" height="12" viewBox="0 0 12 12">
                <circle cx="6" cy="6" r="6" fill="#111" />
                <path d="M6 5v4.500" stroke="#fff" strokeWidth="2" />
                <circle cx="6" cy="3" r="1.100" fill="#fff" />
              </svg>
              <FootButton $first>OK</FootButton>
              <FootButton>Cancel</FootButton>
            </DialogFoot>
          </Dialog>

          <NavBar>
            {navIcons.map((n, i) => (
              <NavItem key={i} $caret={n.caret}>
                <NavIcon>
                  <svg width="22" height="20" viewBox="0 0 22 20">{n.node}</svg>
                </NavIcon>
                {n.caret && <Caret />}
              </NavItem>
            ))}
          </NavBar>
          <ChatBubble>
            <svg width="9" height="9" viewBox="0 0 12 12">
              <path d="M1 6a5 4 0 0 1 10 0 5 4 0 0 1-7 3.500L2 11l.500-2.500A4 4 0 0 1 1 6z" fill="#fff" />
            </svg>
          </ChatBubble>
        </Canvas>
      </Page>
    </>
  );
}
